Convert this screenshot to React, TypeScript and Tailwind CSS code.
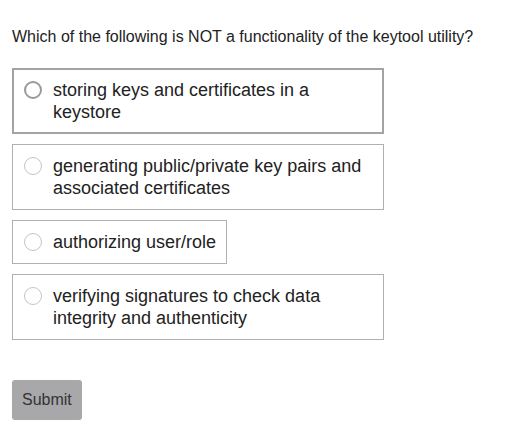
import { useState } from 'react';

const options = [
  'storing keys and certificates in a keystore',
  'generating public/private key pairs and associated certificates',
  'authorizing user/role',
  'verifying signatures to check data integrity and authenticity',
];

export default function App() {
  const [hovered] = useState(0);

  return (
    <div className="min-h-screen bg-white px-3 pt-[27px] text-[#222] font-['Liberation_Sans',Arial,sans-serif]">
      <p className="text-[16px] leading-[20px]">
        Which of the following is NOT a functionality of the keytool utility?
      </p>

      <div className="mt-[21px] flex flex-col items-start gap-[10px]">
        {options.map((opt, i) => (
          <label
            key={opt}
            className={`flex w-fit max-w-[372px] items-start gap-[11px] bg-white pl-[10px] pr-[10px] ${
              i === hovered
                ? 'border-2 border-[#a3a3a3] py-[9px] pl-[10px]'
                : 'border border-[#b0b0b0] py-[10px] pl-[11px]'
            }`}
          >
            <span
              className={`mt-[2px] h-[18px] w-[18px] shrink-0 rounded-full bg-white ${
                i === hovered ? 'border-2 border-[#9a9a9a]' : 'border border-[#c4c4c4]'
              }`}
            />
            <span className="text-[18px] leading-[22px]">{opt}</span>
          </label>
        ))}
      </div>

      <button className="mt-[40px] h-[40px] rounded-[3px] bg-[#a8a8ab] px-[10px] text-[16px] text-[#333]">
        Submit
      </button>
    </div>
  );
}
